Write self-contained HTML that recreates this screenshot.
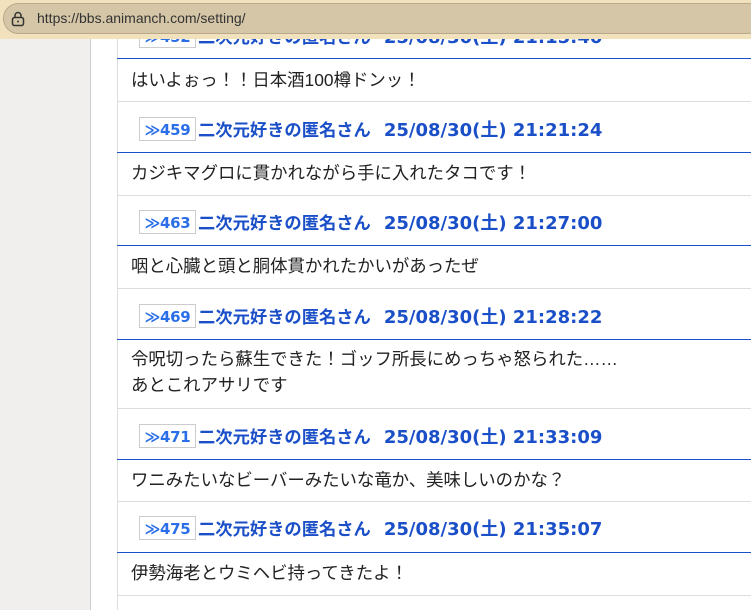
<!DOCTYPE html>
<html><head><meta charset="utf-8"><style>
body{margin:0;width:751px;height:610px;overflow:hidden;background:#fff;font-family:"Liberation Sans","Noto Sans CJK JP",sans-serif;position:relative}
.bar{position:absolute;left:0;top:0;width:751px;height:39px;background:#f1e2bd}
.addr{position:absolute;left:3px;top:3px;width:760px;height:31px;background:#d4c6a6;border:1px solid #b9a98a;border-radius:16px;box-sizing:border-box}
.url{position:absolute;left:37px;top:10px;font-size:14px;color:#333}
.side{position:absolute;left:0;top:39px;width:90px;height:571px;background:#f0efed;border-right:1px solid #ccc}
.main{position:absolute;left:117px;top:39px;width:634px;height:571px;border-left:1px solid #ddd}
.h{position:absolute;left:139px;height:24px;font-size:17.3px;font-weight:bold;color:#1a4fc8;white-space:nowrap;line-height:24px;font-family:"DejaVu Sans","Noto Sans CJK JP",sans-serif}
.nm{font-family:"Noto Sans CJK JP",sans-serif}
.d{margin-left:13px;font-size:18px}
.n{display:inline-block;border:1px solid #ccc;color:#2b6fe8;font-size:15px;padding:0;height:24px;line-height:24px;margin-right:2px;vertical-align:top;width:57px;text-align:center;box-sizing:border-box;letter-spacing:-0.3px}
.ul{position:absolute;left:117px;width:634px;height:1px;background:#1a4fc8}
.sep{position:absolute;left:117px;width:634px;height:1px;background:#ddd}
.t{position:absolute;left:131px;font-size:17.4px;color:#222;line-height:26px;white-space:nowrap}
</style></head><body>
<div class="bar"><div class="addr"></div>
<svg style="position:absolute;left:11px;top:11px" width="14" height="16"><rect x="1.5" y="6.5" width="11" height="8" rx="2" fill="none" stroke="#333" stroke-width="1.5"/><path d="M4 6.5V4.5a3 3 0 0 1 6 0v2" fill="none" stroke="#333" stroke-width="1.5"/><circle cx="7" cy="10.5" r="1" fill="#333"/></svg>
<div class="url">https://bbs.animanch.com/setting/</div></div>
<div class="side"></div><div class="main"></div>
<div class="h" style="top:24px;clip-path:inset(15px 0 0 0)"><span class="n">≫452</span><span class="nm">二次元好きの匿名さん</span><span class="d">25/08/30(土) 21:15:40</span></div>
<div class="ul" style="top:58px"></div><div class="t" style="top:67px">はいよぉっ！！日本酒100樽ドンッ！</div><div class="sep" style="top:101px"></div>

<div class="h" style="top:117px"><span class="n">≫459</span><span class="nm">二次元好きの匿名さん</span><span class="d">25/08/30(土) 21:21:24</span></div>
<div class="ul" style="top:152px"></div><div class="t" style="top:160px">カジキマグロに貫かれながら手に入れたタコです！</div><div class="sep" style="top:195px"></div>

<div class="h" style="top:210px"><span class="n">≫463</span><span class="nm">二次元好きの匿名さん</span><span class="d">25/08/30(土) 21:27:00</span></div>
<div class="ul" style="top:245px"></div><div class="t" style="top:253px">咽と心臓と頭と胴体貫かれたかいがあったぜ</div><div class="sep" style="top:288px"></div>

<div class="h" style="top:304px"><span class="n">≫469</span><span class="nm">二次元好きの匿名さん</span><span class="d">25/08/30(土) 21:28:22</span></div>
<div class="ul" style="top:339px"></div><div class="t" style="top:346px">令呪切ったら蘇生できた！ゴッフ所長にめっちゃ怒られた……<br>あとこれアサリです</div><div class="sep" style="top:408px"></div>

<div class="h" style="top:424px"><span class="n">≫471</span><span class="nm">二次元好きの匿名さん</span><span class="d">25/08/30(土) 21:33:09</span></div>
<div class="ul" style="top:459px"></div><div class="t" style="top:467px">ワニみたいなビーバーみたいな竜か、美味しいのかな？</div><div class="sep" style="top:501px"></div>

<div class="h" style="top:516px"><span class="n">≫475</span><span class="nm">二次元好きの匿名さん</span><span class="d">25/08/30(土) 21:35:07</span></div>
<div class="ul" style="top:552px"></div><div class="t" style="top:560px">伊勢海老とウミヘビ持ってきたよ！</div><div class="sep" style="top:595px"></div>
</body></html>
